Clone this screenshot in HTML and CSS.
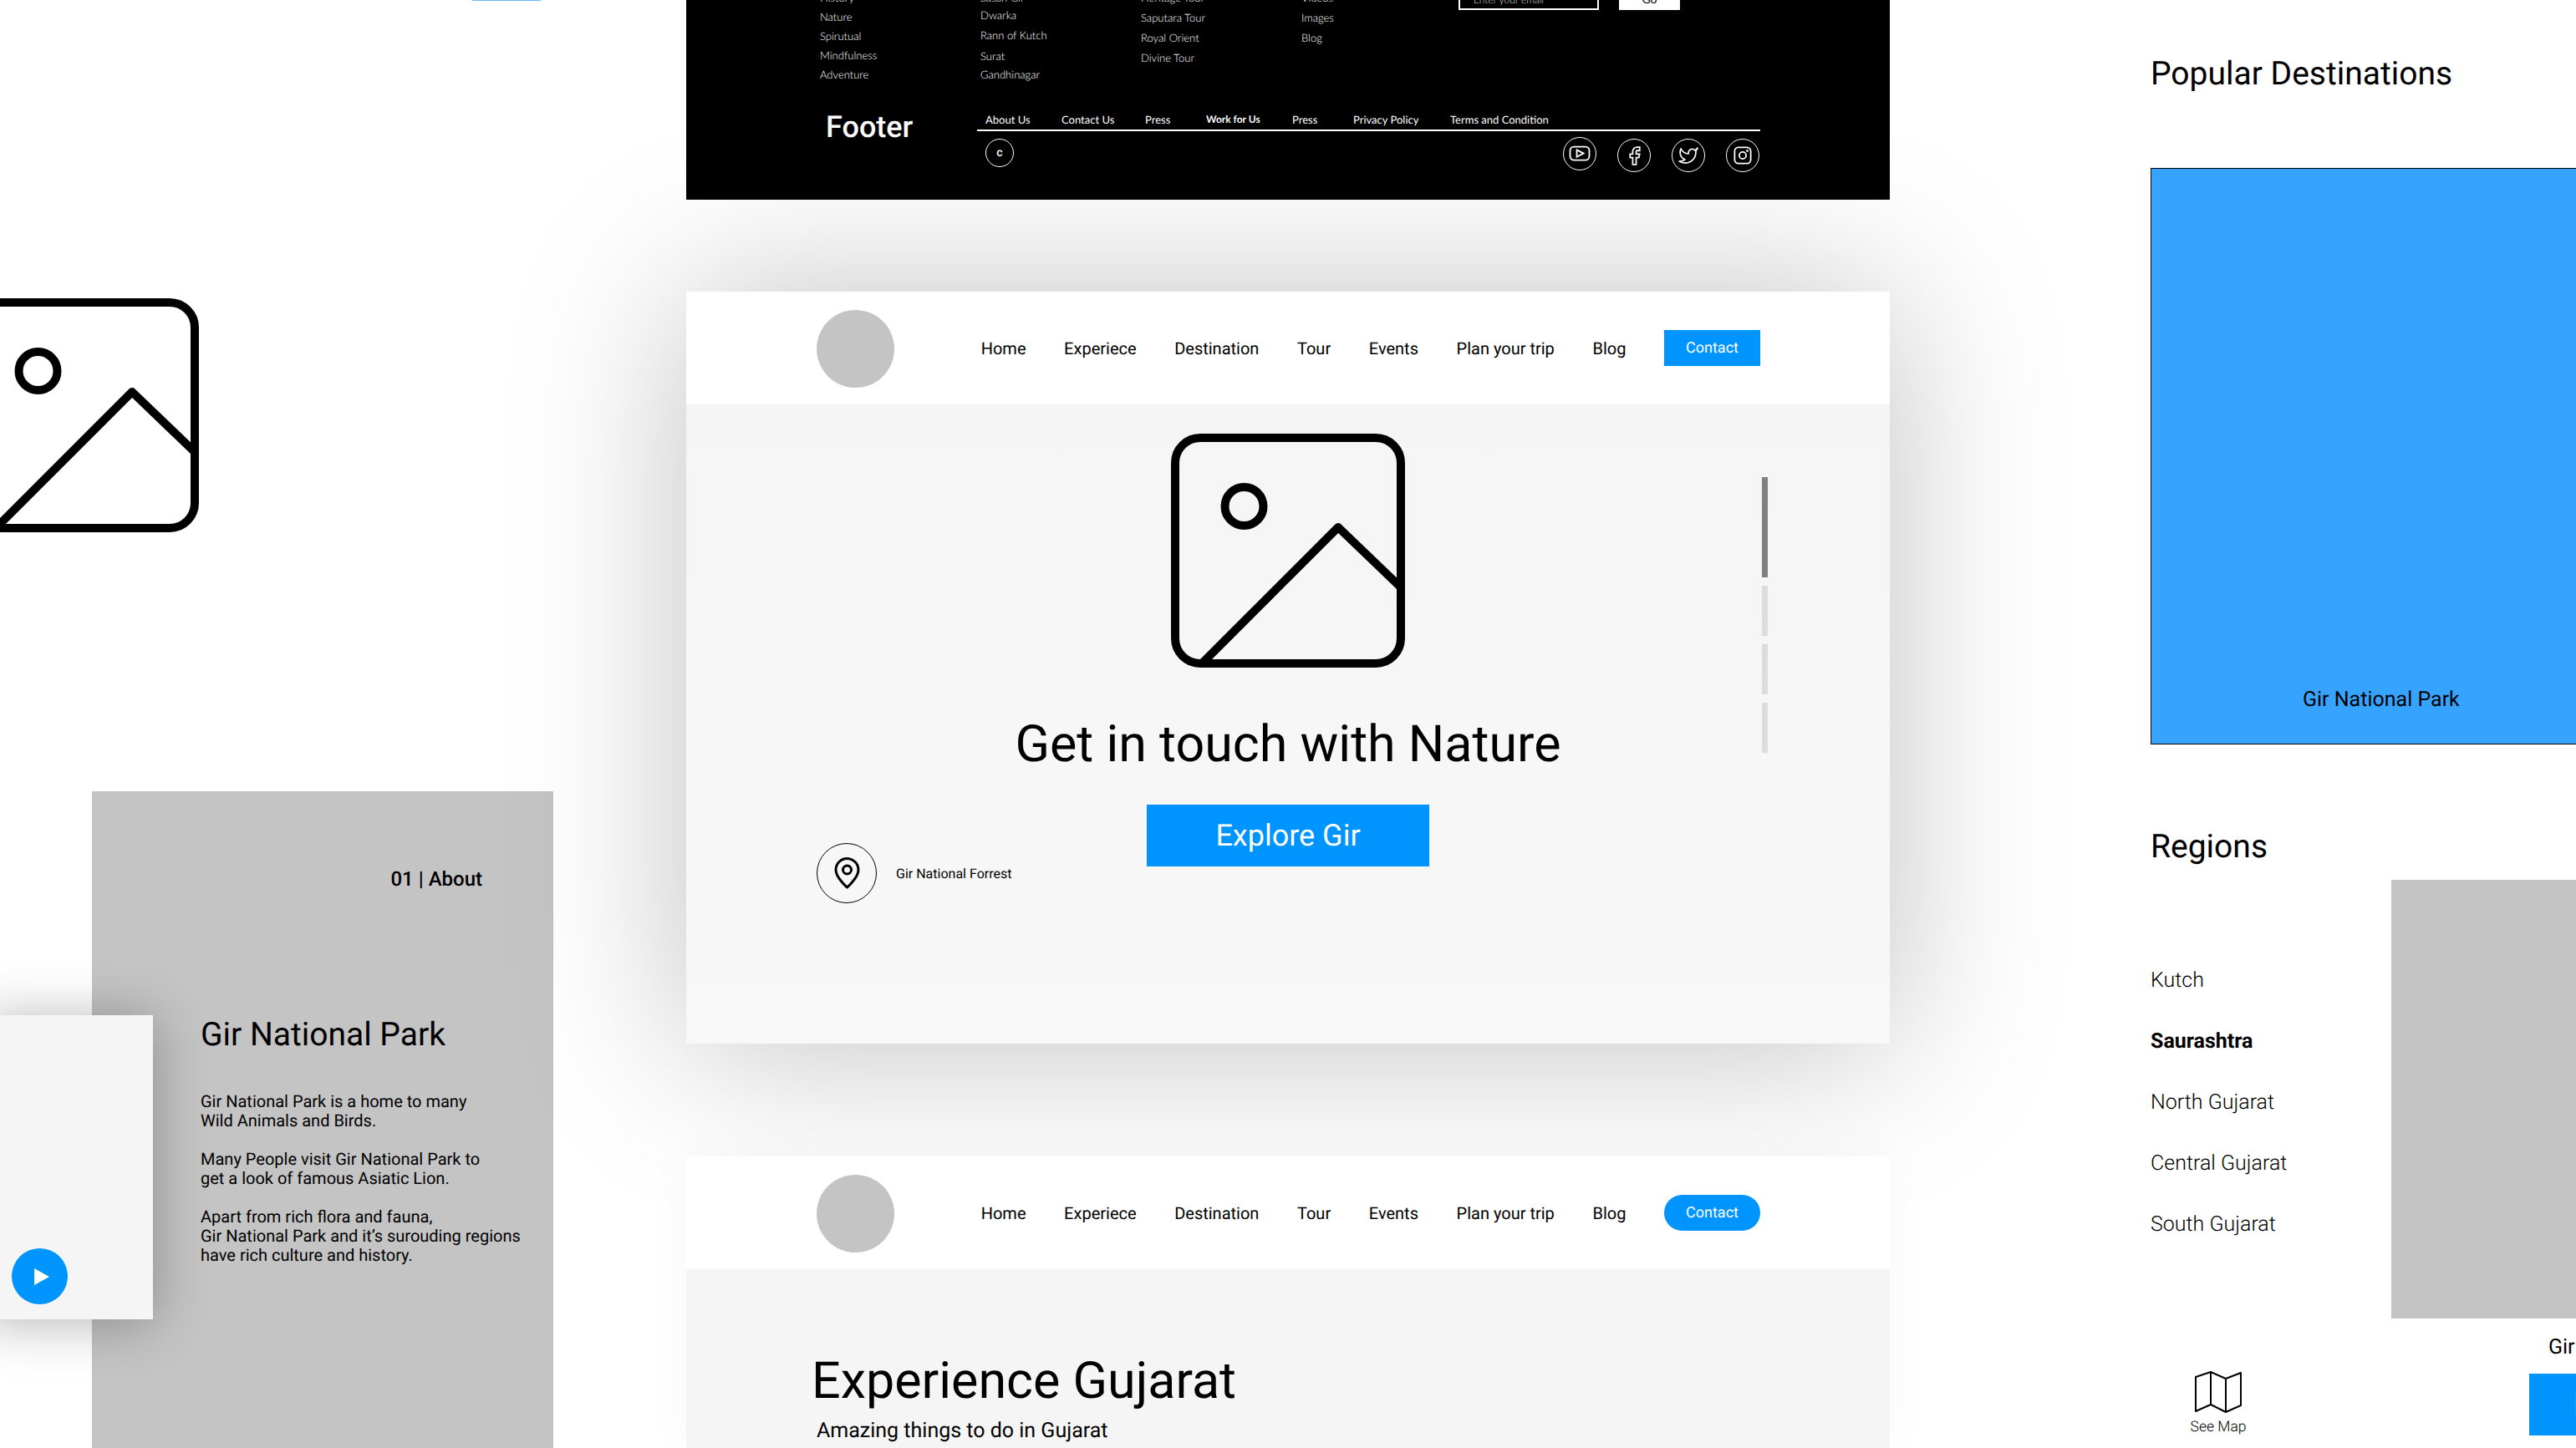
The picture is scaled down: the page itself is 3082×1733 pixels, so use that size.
FILE: index.html
```html
<!DOCTYPE html>
<html lang="en">
<head>
    <meta charset="UTF-8">
    <title>Gujarat Tourism Wireframes</title>
    <link rel="stylesheet" href="styles.css">
</head>
<body>
    <svg class="defs" width="0" height="0">
        <symbol id="picture" viewBox="0 0 280 280">
            <rect x="5" y="5" width="270" height="270" rx="30" fill="none" stroke="#000" stroke-width="10"/>
            <circle cx="87.500" cy="87" r="23" fill="none" stroke="#000" stroke-width="10"/>
            <polyline points="275,184 200,112 37,275" fill="none" stroke="#000" stroke-width="10" stroke-linejoin="round"/>
        </symbol>
    </svg>

    <div class="top-pill"></div>

    <!-- large placeholder on the left -->
    <svg class="loose-picture"><use href="#picture"/></svg>

    <!-- about frame -->
    <section class="about">
        <div class="about-tag">01 | About</div>
        <h2 class="about-title">Gir National Park</h2>
        <p>Gir National Park is a home to many<br>Wild Animals and Birds.</p>
        <p>Many People visit Gir National Park to<br>get a look of famous Asiatic Lion.</p>
        <p>Apart from rich flora and fauna,<br>Gir National Park and it’s surouding regions<br>have rich culture and history.</p>
    </section>
    <div class="video-card">
        <div class="play"><svg width="18" height="20" viewBox="0 0 18 20"><polygon points="0,0 18,10 0,20" fill="#fff"/></svg></div>
    </div>

    <!-- footer frame -->
    <footer class="footer">
        <div class="footer-cols">
            <ul class="col">
                <li>History</li><li>Nature</li><li>Spirutual</li><li>Mindfulness</li><li>Adventure</li>
            </ul>
            <ul class="col col-places">
                <li>Sasan Gir</li><li>Dwarka</li><li>Rann of Kutch</li><li>Surat</li><li>Gandhinagar</li>
            </ul>
            <ul class="col col-tours">
                <li>Heritage Tour</li><li>Saputara Tour</li><li>Royal Orient</li><li>Divine Tour</li>
            </ul>
            <ul class="col col-tours col-short">
                <li>Videos</li><li>Images</li><li>Blog</li>
            </ul>
            <div class="newsletter">
                <div class="email">Enter your email</div>
                <div class="go">Go</div>
            </div>
        </div>
        <div class="footer-bottom">
            <div class="footer-name">Footer</div>
            <div class="footer-right">
                <div class="footer-links">
                    <span>About Us</span><span>Contact Us</span><span>Press</span><span class="strong">Work for Us</span><span>Press</span><span>Privacy Policy</span><span>Terms and Condition</span>
                </div>
                <div class="footer-lower">
                    <div class="copyright">c</div>
                    <div class="socials">
                        <div class="social social-first">
                            <svg width="26" height="26" viewBox="0 0 34 34" fill="none" stroke="#fff" stroke-width="2.400"><rect x="2" y="6" width="30" height="21" rx="6"/><polygon points="12.500,11 23,16.500 12.500,22"/></svg>
                        </div>
                        <div class="social">
                            <svg width="25" height="25" viewBox="0 0 24 24" fill="none" stroke="#fff" stroke-width="1.700"><path d="M18 2h-3a5 5 0 0 0-5 5v3H7v4h3v8h4v-8h3l1-4h-4V7a1 1 0 0 1 1-1h3z"/></svg>
                        </div>
                        <div class="social">
                            <svg width="24" height="24" viewBox="0 0 24 24" fill="none" stroke="#fff" stroke-width="1.700" stroke-linejoin="round"><path d="M23 3a10.900 10.900 0 0 1-3 3 4.480 4.480 0 0 0-7.860 3v1A10.660 10.660 0 0 1 3 4s-4 9 5 13a11.640 11.640 0 0 1-7 2c9 5 20 0 20-11.500a4.500 4.500 0 0 0-.08-.83A7.720 7.720 0 0 0 23 3z"/></svg>
                        </div>
                        <div class="social">
                            <svg width="22" height="22" viewBox="0 0 24 24" fill="none" stroke="#fff" stroke-width="2"><rect x="1.500" y="1.500" width="21" height="21" rx="5"/><circle cx="12" cy="12" r="4.500"/><circle cx="18" cy="6" r="0.600"/></svg>
                        </div>
                    </div>
                </div>
            </div>
        </div>
    </footer>

    <!-- hero frame -->
    <section class="frame hero">
        <header class="nav">
            <div class="logo"></div>
            <nav class="menu">
                <a>Home</a><a>Experiece</a><a>Destination</a><a>Tour</a><a>Events</a><a>Plan your trip</a><a>Blog</a>
                <a class="contact">Contact</a>
            </nav>
        </header>
        <div class="hero-body">
            <svg class="hero-picture"><use href="#picture"/></svg>
            <h1 class="big-title">Get in touch with Nature</h1>
            <div class="hero-row">
                <div class="place">
                    <div class="place-ring">
                        <svg width="31" height="38" viewBox="0 0 31 38" fill="none" stroke="#000" stroke-width="3"><path d="M15.500 36C15.500 36 29 24.500 29 15A13.500 13.500 0 0 0 2 15C2 24.500 15.500 36 15.500 36Z" stroke-linejoin="round"/><circle cx="15.500" cy="15" r="5"/></svg>
                    </div>
                    <span>Gir National Forrest</span>
                </div>
                <a class="explore">Explore Gir</a>
            </div>
            <div class="slider">
                <i class="on"></i><i></i><i></i><i></i>
            </div>
        </div>
    </section>

    <!-- experience frame -->
    <section class="frame experience">
        <header class="nav">
            <div class="logo"></div>
            <nav class="menu">
                <a>Home</a><a>Experiece</a><a>Destination</a><a>Tour</a><a>Events</a><a>Plan your trip</a><a>Blog</a>
                <a class="contact contact-round">Contact</a>
            </nav>
        </header>
        <div class="experience-body">
            <h1 class="big-title">Experience Gujarat</h1>
            <p>Amazing things to do in Gujarat</p>
        </div>
    </section>

    <!-- destinations column -->
    <aside class="side">
        <h2 class="side-title">Popular Destinations</h2>
        <div class="blue-card">Gir National Park</div>
        <h2 class="side-title regions-title">Regions</h2>
        <div class="regions">
            <div class="region-list">
                <ul>
                    <li>Kutch</li>
                    <li class="active">Saurashtra</li>
                    <li>North Gujarat</li>
                    <li>Central Gujarat</li>
                    <li>South Gujarat</li>
                </ul>
                <div class="see-map">
                    <svg width="56" height="50" viewBox="0 0 56 50" fill="none" stroke="#000" stroke-width="2" stroke-linejoin="round"><path d="M1 7L19 1L37 9L55 2V41L37 49L19 40L1 48ZM19 1V40M37 9V49"/></svg>
                    <span>See Map</span>
                </div>
            </div>
            <div class="region-photo">
                <div class="photo"></div>
                <div class="photo-name">Gir National Park</div>
                <a class="photo-btn">Explore</a>
            </div>
        </div>
    </aside>
</body>
</html>
```

FILE: styles.css
```css
* {
    margin: 0;
    padding: 0;
    box-sizing: border-box;
}

body {
    position: relative;
    width: 3082px;
    height: 1733px;
    overflow: hidden;
    background: #fff;
    font-family: Roboto, "Liberation Sans", sans-serif;
    color: #000;
    text-rendering: geometricPrecision;
}

ul {
    list-style: none;
}

.defs {
    position: absolute;
}

.top-pill {
    position: absolute;
    left: 565px;
    top: 0;
    width: 82px;
    height: 1px;
    background: #66bdff;
}

.loose-picture {
    position: absolute;
    left: -42px;
    top: 357px;
    width: 280px;
    height: 280px;
}

/* about frame */
.about {
    position: absolute;
    left: 110px;
    top: 947px;
    width: 552px;
    height: 786px;
    padding-left: 130px;
    background: #c4c4c4;
    font-size: 20px;
    line-height: 23px;
}

.about-tag {
    margin: 91px 85px 0 0;
    text-align: right;
    font-size: 24px;
    line-height: 28px;
    font-weight: 500;
}

.about-title {
    margin: 149px 0 45px;
    font-size: 39px;
    line-height: 47px;
    font-weight: 400;
}

.about p {
    margin-bottom: 23px;
}

.video-card {
    position: absolute;
    left: -20px;
    top: 1215px;
    width: 203px;
    height: 364px;
    background: #f5f5f5;
    box-shadow: 0 4px 60px rgba(0, 0, 0, 0.3);
}

.play {
    position: absolute;
    left: 34px;
    top: 279px;
    width: 67px;
    height: 67px;
    display: flex;
    align-items: center;
    justify-content: center;
    padding-left: 4px;
    border-radius: 50%;
    background: #0094ff;
}

/* footer frame */
.footer {
    position: absolute;
    left: 821px;
    top: 0;
    width: 1440px;
    height: 239px;
    overflow: hidden;
    background: #000;
    color: #fff;
    font-family: Lato, "Liberation Sans", sans-serif;
}

.footer-cols {
    display: flex;
    height: 125px;
    padding-left: 160px;
}

.col {
    width: 192px;
    margin-top: -14px;
    font-size: 13px;
    font-weight: 300;
    line-height: 23px;
}

.col-places li:nth-child(2) {
    margin-top: -2px;
}

.col-places li:nth-child(3) {
    margin-top: 1px;
}

.col-places li:nth-child(4) {
    margin-top: 2px;
}

.col-places li:nth-child(5) {
    margin-top: -1px;
}

.col-tours li {
    margin-bottom: 1px;
}

.col-short {
    width: 188px;
}

.newsletter {
    display: flex;
    gap: 24px;
    height: 42px;
    margin-top: -30px;
}

.email {
    width: 168px;
    padding: 21px 0 0 16px;
    border: 2px solid #fff;
    font-size: 12px;
    font-weight: 300;
    line-height: 14px;
    color: #ddd;
}

.go {
    width: 73px;
    padding-top: 21px;
    background: #fff;
    color: #000;
    text-align: center;
    font-size: 14px;
    line-height: 16px;
}

.footer-bottom {
    display: flex;
    padding-left: 167px;
}

.footer-name {
    width: 181px;
    margin-top: 6px;
    font-family: Roboto, sans-serif;
    font-size: 36px;
    line-height: 42px;
    font-weight: 500;
}

.footer-right {
    width: 937px;
}

.footer-links {
    display: grid;
    grid-template-columns: 91px 100px 73px 103px 73px 116px auto;
    height: 32px;
    padding: 10px 0 0 10px;
    border-bottom: 2px solid #fff;
    font-size: 13px;
    line-height: 16px;
    white-space: nowrap;
}

.strong {
    font-size: 12px;
    font-weight: 700;
}

.footer-lower {
    display: flex;
    justify-content: space-between;
    padding: 9px 1px 0 10px;
}

.copyright {
    display: flex;
    align-items: center;
    justify-content: center;
    width: 34px;
    height: 34px;
    border: 1px solid #fff;
    border-radius: 50%;
    font-family: Roboto, sans-serif;
    font-size: 14px;
    font-weight: 500;
}

.socials {
    display: flex;
    gap: 25px;
}

.social {
    display: flex;
    align-items: center;
    justify-content: center;
    width: 40px;
    height: 40px;
    border: 1px solid #fff;
    border-radius: 50%;
}

.social-first {
    margin-top: -2px;
}

/* shared frame parts */
.frame {
    position: absolute;
    left: 821px;
    width: 1440px;
}

.nav {
    display: flex;
    align-items: flex-start;
    justify-content: space-between;
    height: 135px;
    padding: 22px 155px 0 156px;
    background: #fff;
}

.logo {
    width: 93px;
    height: 93px;
    border-radius: 50%;
    background: #c4c4c4;
}

.menu {
    display: flex;
    align-items: center;
    gap: 45.600px;
    height: 43px;
    margin-top: 24px;
    font-size: 20px;
}

.contact {
    display: flex;
    align-items: center;
    justify-content: center;
    width: 115px;
    height: 43px;
    background: #0094ff;
    color: #fff;
    font-size: 18px;
}

.contact-round {
    border-radius: 22px;
}

.big-title {
    font-size: 61px;
    line-height: 73px;
    font-weight: 400;
}

/* hero frame */
.hero {
    top: 349px;
    height: 900px;
    box-shadow: 0 4px 190px rgba(0, 0, 0, 0.25);
}

.hero-body {
    position: relative;
    display: flex;
    flex-direction: column;
    align-items: center;
    height: 765px;
    padding-top: 35px;
    background: linear-gradient(#f5f5f5, #f8f8f8);
}

.hero-picture {
    width: 280px;
    height: 280px;
}

.hero .big-title {
    margin-top: 55px;
}

.hero-row {
    display: grid;
    grid-template-columns: 1fr 338px 1fr;
    width: 100%;
    margin-top: 36px;
    padding-left: 156px;
}

.place {
    display: flex;
    align-items: center;
    gap: 23px;
    margin-top: 46px;
    margin-right: -156px;
    font-size: 16px;
}

.place-ring {
    display: flex;
    align-items: center;
    justify-content: center;
    width: 72px;
    height: 72px;
    border: 1px solid #000;
    border-radius: 50%;
}

.explore {
    display: flex;
    align-items: center;
    justify-content: center;
    height: 74px;
    margin-left: -78px;
    margin-right: 78px;
    background: #0094ff;
    color: #fff;
    font-size: 36px;
}

.slider {
    position: absolute;
    left: 1287px;
    top: 87px;
    display: flex;
    flex-direction: column;
    gap: 10px;
    width: 7px;
}

.slider i {
    display: block;
    height: 60px;
    background: #dcdcdc;
}

.slider .on {
    height: 120px;
    background: #808080;
}

/* experience frame */
.experience {
    top: 1384px;
    height: 349px;
    box-shadow: 0 0 60px rgba(0, 0, 0, 0.03);
}

.experience-body {
    height: 214px;
    padding: 97px 0 0 150px;
    background: #f5f5f5;
}

.experience-body p {
    margin: 8px 0 0 6px;
    font-size: 25px;
    line-height: 32px;
}

/* destinations column */
.side {
    position: absolute;
    left: 2573px;
    top: 0;
    width: 800px;
    padding-top: 65px;
}

.side-title {
    font-size: 39px;
    line-height: 47px;
    font-weight: 400;
}

.blue-card {
    display: flex;
    align-items: flex-end;
    height: 690px;
    margin-top: 89px;
    padding: 0 0 37px 181px;
    border: 1px solid #000;
    background: #36a4ff;
    font-size: 25px;
    line-height: 30px;
}

.regions-title {
    margin-top: 99px;
}

.regions {
    display: flex;
    margin-top: 16px;
}

.region-list {
    width: 288px;
    flex: none;
}

.region-list ul {
    padding-top: 84px;
}

.region-list li {
    font-size: 25px;
    font-weight: 300;
    line-height: 73px;
}

.region-list .active {
    font-weight: 700;
}

.see-map {
    display: flex;
    flex-direction: column;
    align-items: center;
    width: 162px;
    margin-top: 139px;
    font-size: 17.500px;
    font-weight: 300;
    line-height: 20px;
}

.see-map svg {
    margin-bottom: 7px;
}

.region-photo {
    flex: 1;
}

.photo {
    height: 525px;
    background: #c4c4c4;
}

.photo-name {
    margin: 20px 0 0 188px;
    font-size: 25px;
    line-height: 30px;
}

.photo-btn {
    display: block;
    width: 338px;
    height: 74px;
    margin: 16px 0 0 165px;
    padding-left: 53px;
    background: #0094ff;
    color: #fff;
    font-size: 36px;
    line-height: 74px;
}
```
